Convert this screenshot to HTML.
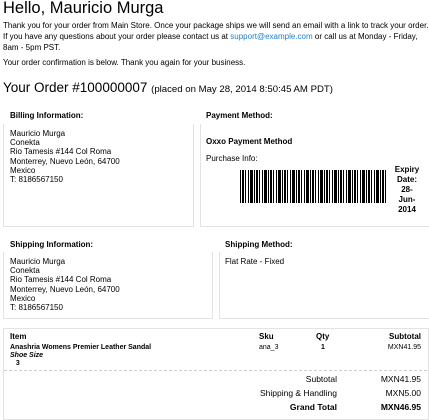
<!DOCTYPE html>
<html><head><style>
body{margin:0;width:429px;height:410px;overflow:hidden;background:#fff;font-family:"Liberation Sans",sans-serif;color:#000;position:relative}
.a{position:absolute;white-space:nowrap}
.s{font-size:8px}
.b{font-weight:bold}
.box{position:absolute;border:1px solid #e3e3e3;border-top:none}
.ln{line-height:9.2px;font-size:8px}
</style></head><body>
<div class="a" style="left:3px;top:-1px;font-size:16.5px">Hello, Mauricio Murga</div>
<div class="a s" style="left:3px;top:20px;line-height:11px">Thank you for your order from Main Store. Once your package ships we will send an email with a link to track your order.<br>If you have any questions about your order please contact us at <span style="color:#1e7ec8">support@example.com</span> or call us at Monday - Friday,<br>8am - 5pm PST.</div>
<div class="a s" style="left:3px;top:58px">Your order confirmation is below. Thank you again for your business.</div>
<div class="a" style="left:3px;top:80px;font-size:13.5px">Your Order #100000007 <span style="font-size:9.6px">(placed on May 28, 2014 8:50:45 AM PDT)</span></div>

<div class="a s b" style="left:10px;top:111px">Billing Information:</div>
<div class="a s b" style="left:206px;top:111px">Payment Method:</div>
<div class="box" style="left:3px;top:124px;width:189px;height:102px"></div>
<div class="box" style="left:200px;top:124px;width:228px;height:102px"></div>
<div class="a ln" style="left:10px;top:129px">Mauricio Murga<br>Conekta<br>Rio Tamesis #144 Col Roma<br>Monterrey, Nuevo León, 64700<br>Mexico<br>T: 8186567150</div>
<div class="a s b" style="left:206px;top:137px">Oxxo Payment Method</div>
<div class="a s" style="left:206px;top:154px">Purchase Info:</div>
<div class="a" style="left:240px;top:170px;width:147px;height:33px;background:repeating-linear-gradient(90deg,#000 0 1px,#fff 1px 2px,#000 2px 4px,#fff 4px 5px,#000 5px 6px,#fff 6px 8px,#000 8px 9px,#fff 9px 10px,#000 10px 13px,#fff 13px 14px)"></div>
<div class="a s b" style="left:392px;top:165px;width:30px;text-align:center;line-height:10px">Expiry<br>Date:<br>28-<br>Jun-<br>2014</div>

<div class="a s b" style="left:10px;top:240px">Shipping Information:</div>
<div class="a s b" style="left:225px;top:240px">Shipping Method:</div>
<div class="box" style="left:3px;top:252px;width:208px;height:66px"></div>
<div class="box" style="left:219px;top:252px;width:209px;height:66px"></div>
<div class="a ln" style="left:10px;top:257px">Mauricio Murga<br>Conekta<br>Rio Tamesis #144 Col Roma<br>Monterrey, Nuevo León, 64700<br>Mexico<br>T: 8186567150</div>
<div class="a s" style="left:225px;top:257px">Flat Rate - Fixed</div>

<div class="a" style="left:3px;top:328px;width:424px;height:90px;border:1px solid #e3e3e3"></div>
<div class="a s b" style="left:10px;top:332px">Item</div>
<div class="a s b" style="left:259px;top:332px">Sku</div>
<div class="a s b" style="left:316px;top:332px">Qty</div>
<div class="a s b" style="left:360px;top:332px;width:61px;text-align:right">Subtotal</div>
<div class="a b" style="left:10px;top:344px;font-size:7px;line-height:8px">Anashria Womens Premier Leather Sandal<br><i>Shoe Size</i><br>&nbsp;&nbsp;&nbsp;3</div>
<div class="a" style="left:259px;top:344px;font-size:7px">ana_3</div>
<div class="a" style="left:321px;top:344px;font-size:7px;font-weight:bold">1</div>
<div class="a" style="left:360px;top:344px;width:61px;text-align:right;font-size:7px">MXN41.95</div>
<div class="a" style="left:4px;top:370px;width:423px;border-top:1px dashed #ccc"></div>
<div class="a" style="left:200px;top:372px;width:137px;text-align:right;line-height:14px;font-size:8.5px">Subtotal<br>Shipping &amp; Handling<br><b>Grand Total</b></div>
<div class="a" style="left:350px;top:372px;width:71px;text-align:right;line-height:14px;font-size:8.5px">MXN41.95<br>MXN5.00<br><b>MXN46.95</b></div>
</body></html>
